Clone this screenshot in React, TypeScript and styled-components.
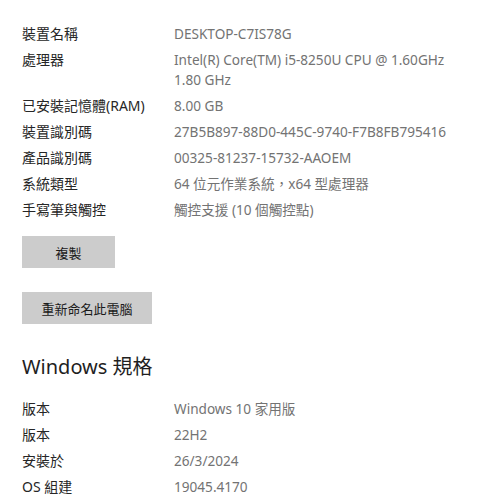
import React from "react";
import styled, { createGlobalStyle } from "styled-components";

const GlobalStyle = createGlobalStyle`
  body {
    margin: 0;
    background: #ffffff;
    font-family: "Noto Sans", "Noto Sans CJK TC", sans-serif;
  }
`;

const Page = styled.div`
  padding: 24px 0 0 22px;
  display: flex;
  flex-direction: column;
`;

const InfoList = styled.div`
  display: flex;
  flex-direction: column;
  gap: 6px;
`;

const Row = styled.div`
  display: grid;
  grid-template-columns: 152px 1fr;
  line-height: 20px;
`;

const Label = styled.div`
  color: #262626;
  font-size: 14px;
`;

const Value = styled.div`
  color: #737373;
  font-size: 13.6px;
  white-space: nowrap;
`;

const Button = styled.button<{ $width: number; $top: number }>`
  width: ${(p) => p.$width}px;
  height: 32px;
  margin-top: ${(p) => p.$top}px;
  border: none;
  background: #cccccc;
  color: #1a1a1a;
  font-family: "Noto Sans CJK TC", sans-serif;
  font-size: 13px;
  padding: 0;
`;

const Heading = styled.h2`
  margin: 29px 0 18px;
  font-size: 20px;
  line-height: 28px;
  font-weight: 400;
  color: #1f1f1f;
`;

const specs: [string, string][] = [
  ["裝置名稱", "DESKTOP-C7IS78G"],
  ["處理器", "Intel(R) Core(TM) i5-8250U CPU @ 1.60GHz\n1.80 GHz"],
  ["已安裝記憶體(RAM)", "8.00 GB"],
  ["裝置識別碼", "27B5B897-88D0-445C-9740-F7B8FB795416"],
  ["產品識別碼", "00325-81237-15732-AAOEM"],
  ["系統類型", "64 位元作業系統，x64 型處理器"],
  ["手寫筆與觸控", "觸控支援 (10 個觸控點)"],
];

const windowsSpecs: [string, string][] = [
  ["版本", "Windows 10 家用版"],
  ["版本", "22H2"],
  ["安裝於", "26/3/2024"],
  ["OS 組建", "19045.4170"],
];

function InfoRows({ items }: { items: [string, string][] }) {
  return (
    <InfoList>
      {items.map(([label, value], i) => (
        <Row key={i}>
          <Label>{label}</Label>
          <Value>
            {value.split("\n").map((line, j) => (
              <div key={j}>{line}</div>
            ))}
          </Value>
        </Row>
      ))}
    </InfoList>
  );
}

export default function App() {
  return (
    <>
      <GlobalStyle />
      <Page>
        <InfoRows items={specs} />
        <Button $width={93} $top={16}>複製</Button>
        <Button $width={130} $top={24}>重新命名此電腦</Button>
        <Heading>Windows 規格</Heading>
        <InfoRows items={windowsSpecs} />
      </Page>
    </>
  );
}
